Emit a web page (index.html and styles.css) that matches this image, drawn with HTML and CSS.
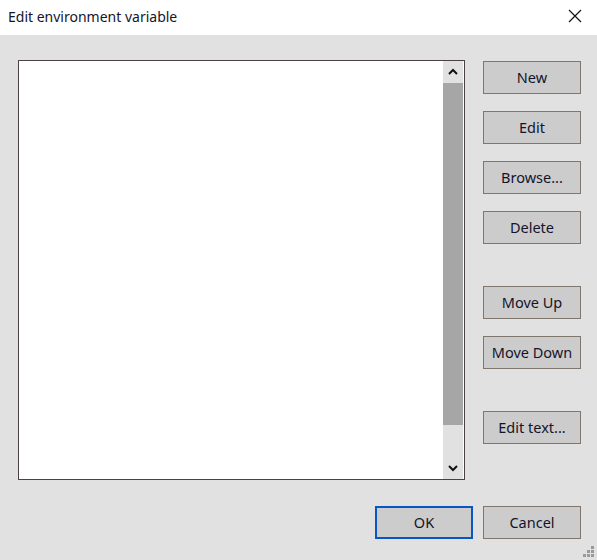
FILE: index.html
```html
<!DOCTYPE html>
<html>
<head>
<meta charset="utf-8">
<link rel="stylesheet" href="styles.css">
</head>
<body>
<div class="window">
  <div class="titlebar">
    <span class="title">Edit environment variable</span>
    <svg class="close" width="14" height="14" viewBox="0 0 14 14"><path d="M1 1L13 13M13 1L1 13" stroke="#111" stroke-width="1.2" fill="none"/></svg>
  </div>
  <div class="content">
    <div class="main">
      <div class="listbox">
        <div class="list"></div>
        <div class="scrollbar">
          <div class="arrow">
            <svg width="10" height="8" viewBox="0 0 10 8"><path d="M1 6L5 2L9 6" stroke="#111" stroke-width="2" fill="none"/></svg>
          </div>
          <div class="thumb"></div>
          <div class="track"></div>
          <div class="arrow">
            <svg width="10" height="8" viewBox="0 0 10 8"><path d="M1 2L5 6L9 2" stroke="#111" stroke-width="2" fill="none"/></svg>
          </div>
        </div>
      </div>
      <div class="buttons">
        <div class="group">
          <button class="btn">New</button>
          <button class="btn">Edit</button>
          <button class="btn">Browse...</button>
          <button class="btn">Delete</button>
        </div>
        <div class="group">
          <button class="btn">Move Up</button>
          <button class="btn">Move Down</button>
        </div>
        <div class="group">
          <button class="btn">Edit text...</button>
        </div>
      </div>
    </div>
    <div class="footer">
      <button class="btn default">OK</button>
      <button class="btn">Cancel</button>
    </div>
    <svg class="grip" width="12" height="12" viewBox="0 0 12 12" fill="#9a9a9a">
      <rect x="8" y="0" width="3" height="3"/>
      <rect x="4" y="4" width="3" height="3"/><rect x="8" y="4" width="3" height="3"/>
      <rect x="0" y="8" width="3" height="3"/><rect x="4" y="8" width="3" height="3"/><rect x="8" y="8" width="3" height="3"/>
    </svg>
  </div>
</div>
</body>
</html>
```
FILE: styles.css
```css
* { box-sizing: border-box; }
html, body { margin: 0; padding: 0; }
body {
  width: 597px;
  height: 560px;
  background: #e1e1e1;
  font-family: "Noto Sans", "Open Sans", sans-serif;
  font-size: 14.5px;
  color: #14142a;
  overflow: hidden;
}
.window { width: 597px; height: 560px; display: flex; flex-direction: column; }
.titlebar {
  height: 35px;
  background: #ffffff;
  display: flex;
  align-items: center;
  justify-content: space-between;
  padding: 0 15px 1px 8px;
}
.title { font-size: 14px; line-height: 1; }
.close { display: block; margin-top: -2px; }
.content {
  position: relative;
  flex: 1;
  padding: 25px 16px 0 18px;
}
.main { display: flex; gap: 18px; }
.listbox {
  width: 447px;
  height: 420px;
  border: 1px solid #4a4245;
  background: #fff;
  display: flex;
}
.list { flex: 1; }
.scrollbar {
  width: 20px;
  margin-right: 1px;
  display: flex;
  flex-direction: column;
  background: #e1e1e1;
}
.arrow {
  height: 22px;
  display: flex;
  align-items: center;
  justify-content: center;
}
.thumb { height: 342px; background: #a6a6a6; }
.track { flex: 1; }
.buttons {
  display: flex;
  flex-direction: column;
  gap: 42px;
  padding-top: 1px;
}
.group { display: flex; flex-direction: column; gap: 17px; }
.btn {
  width: 98px;
  height: 33px;
  background: #cccccc;
  border: 1px solid #7f766e;
  font-family: inherit;
  font-size: 14.5px;
  color: #14142a;
  padding: 0 0 1px 0;
  margin: 0;
}
.footer {
  display: flex;
  justify-content: flex-end;
  gap: 10px;
  margin-top: 26px;
}
.btn.default { border: 2px solid #0a55c4; }
.grip { position: absolute; right: 2px; bottom: 2px; }
```
